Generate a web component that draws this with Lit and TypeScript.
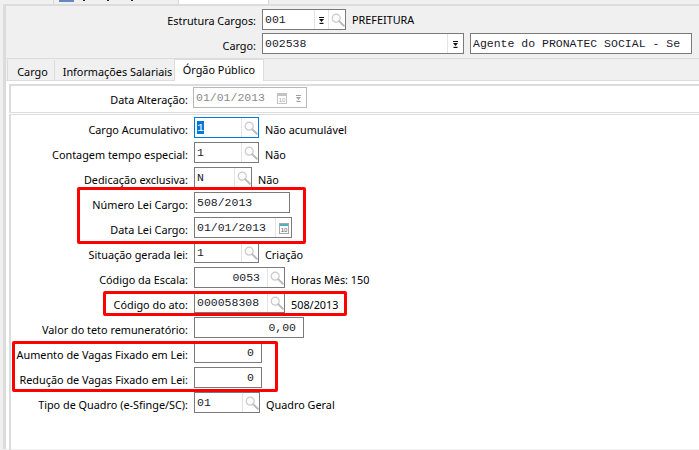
import { LitElement, html, css, svg } from "lit";
import { customElement } from "lit/decorators.js";

const lens = html`<svg class="lens" width="14" height="14" viewBox="0 0 14 14" fill="none">
  <circle cx="5.2" cy="5.2" r="4" stroke="#cacaca" stroke-width="1.2" fill="#fbfbfb"/>
  <path d="M8.4 8.4 L12.8 12.8" stroke="#bcbcbc" stroke-width="2" stroke-linecap="round"/>
</svg>`;

const spin = (color: string) => html`<svg width="5" height="7" viewBox="0 0 5 7">
  <path d="M0 0.5H5" stroke="${color}" stroke-width="1"/>
  <path d="M0 2H5L2.5 5Z" fill="${color}"/>
  <path d="M0.5 6.4H4.5" stroke="${color}" stroke-width="1.2"/>
</svg>`;

const cal = (dim: boolean) => html`<svg width="10" height="11" viewBox="0 0 10 11">
  <rect x="0.5" y="0.5" width="9" height="10" fill="#fff" stroke="${dim ? "#c4c4c4" : "#a8a8a8"}"/>
  <rect x="1" y="1" width="8" height="2" fill="${dim ? "#c4c4c4" : "#4fb3bf"}"/>
  ${svg`<text x="5" y="9.2" text-anchor="middle" font-size="6" font-family="Liberation Sans, sans-serif" fill="${dim ? "#aaa" : "#555"}">10</text>`}
</svg>`;

@customElement("app-root")
export class AppRoot extends LitElement {
  static styles = css`
    :host {
      display: block;
      position: relative;
      width: 699px;
      height: 450px;
      overflow: hidden;
      background: #f0f0f0;
      font-family: "Noto Sans", "DejaVu Sans", sans-serif;
      font-size: 10.85px;
      color: #000;
    }
    .strip { display: flex; height: 4px; padding-left: 53px; }
    .strip-tab { width: 119px; border-left: 1px solid #d8d8d8; border-right: 1px solid #d8d8d8; display: flex; padding-left: 5px; gap: 9px; }
    .strip-icon { width: 15px; height: 2px; background: #6488c0; }
    .strip-mark { width: 2px; height: 1px; background: #222; margin-right: 13px; }
    .strip-active { width: 89px; background: #fff; border-right: 1px solid #d8d8d8; }

    .frame { margin-left: 3px; border-left: 3px solid #dcdcdc; border-top: 2px solid #dcdcdc; }
    .header {
      border-bottom: 1px solid #dcdcdc;
      padding: 3px 0 4px;
      display: flex;
      flex-direction: column;
      gap: 3px;
      height: 45px;
    }
    .row { display: flex; align-items: center; height: 21px; flex: none; }
    .label { flex: none; text-align: right; white-space: nowrap; padding-top: 3px; }
    .estr { padding-top: 1px; }
    .header .label { width: 250px; margin-right: 6px; }
    .body-label { width: 177px; margin-right: 6px; }
    .field {
      box-sizing: border-box;
      height: 21px;
      border: 1px solid #7a7a7a;
      background: #fff;
      display: flex;
      align-items: stretch;
      font-family: "Liberation Mono", monospace;
      font-size: 11.5px;
      color: #1a1a2a;
      flex: none;
    }
    .val { flex: 1; padding: 2px 0 0 2px; line-height: 15px; white-space: pre; overflow: hidden; }
    .val.right { text-align: right; padding-right: 7px; }
    .btn { flex: none; width: 17px; border-left: 1px solid #e4e4e4; display: flex; align-items: center; justify-content: center; padding-top: 1px; box-sizing: border-box; }
    .btn.plain { width: 16px; }
    .btn.narrow { width: 14px; }
    .btn.bare { width: 16px; border-left: none; }
    .lens { margin-left: 2px; }
    .after { margin-left: 6px; padding-top: 3px; white-space: nowrap; }
    .after.top { padding-top: 0; }
    .w58 { width: 58px; } .w65 { width: 65px; } .w66 { width: 66px; } .w68 { width: 68px; }
    .w84 { width: 84px; } .w91 { width: 91px; } .w96 { width: 96px; } .w98 { width: 98px; }
    .w110 { width: 110px; } .w114 { width: 114px; } .w202 { width: 202px; }
    .w222 { width: 222px; margin-left: 6px; }

    .tabs { display: flex; height: 21px; padding-left: 1px; align-items: flex-end; }
    .tab { box-sizing: border-box; height: 20px; display: flex; align-items: center; justify-content: center; border-left: 1px solid #dcdcdc; white-space: nowrap; padding-top: 2px; }
    .t1 { width: 47px; padding-left: 3px; }
    .t2 { width: 120px; padding-left: 6px; }
    .t3 { width: 90px; height: 22px; background: #fff; border: 1px solid #dcdcdc; border-bottom: none; padding: 0 0 3px; position: relative; top: 1px; }

    .pane { background: #fff; border-top: 1px solid #dcdcdc; padding: 3px 0 0 3px; height: 369px; box-sizing: border-box; }
    .box1 { border-top: 2px solid #dcdcdc; border-left: 2px solid #dcdcdc; border-bottom: 1px solid #dcdcdc; padding: 1px 0 4px; margin-bottom: 1px; }
    .box1 .field { margin-left: -1px; color: #8a8a8a; border-color: #b8b8b8; }
    .box2 { border-top: 1px solid #dcdcdc; border-left: 2px solid #dcdcdc; padding-top: 2px; display: flex; flex-direction: column; gap: 4px; height: 340px; }

    .focus { border-color: #0078d7; }
    .sel { background: #0078d7; color: #fff; display: inline-block; width: 7px; height: 13px; line-height: 13px; }

    .red { position: absolute; box-sizing: border-box; border: 3px solid #f00; border-radius: 2px; pointer-events: none; }
    .r1 { left: 77px; top: 187px; width: 229px; height: 57px; }
    .r2 { left: 103px; top: 291px; width: 244px; height: 25px; }
    .r3 { left: 12px; top: 341px; width: 266px; height: 51px; }
  `;

  private lookup(w: string, v: string, right = false) {
    return html`<div class="field ${w}">
      <div class="val ${right ? "right" : ""}">${v}</div>
      <div class="btn">${lens}</div>
    </div>`;
  }

  private lbl(t: string) {
    return html`<div class="label body-label">${t}</div>`;
  }

  render() {
    return html`
      <div class="strip">
        <div class="strip-tab">
          <span class="strip-icon"></span>
          <span class="strip-mark"></span><span class="strip-mark"></span><span class="strip-mark"></span>
        </div>
        <div class="strip-active"></div>
      </div>

      <div class="frame">
        <div class="header">
          <div class="row">
            <div class="label estr">Estrutura Cargos:</div>
            <div class="field w84">
              <div class="val">001</div>
              <div class="btn narrow">${spin("#111")}</div>
              <div class="btn">${lens}</div>
            </div>
            <div class="after top">PREFEITURA</div>
          </div>
          <div class="row">
            <div class="label">Cargo:</div>
            <div class="field w202">
              <div class="val">002538</div>
              <div class="btn plain">${spin("#111")}</div>
            </div>
            <div class="field w222">
              <div class="val">Agente do PRONATEC SOCIAL - Se</div>
            </div>
          </div>
        </div>

        <div class="tabs">
          <div class="tab t1">Cargo</div>
          <div class="tab t2">Informações Salariais</div>
          <div class="tab t3">Órgão Público</div>
        </div>

        <div class="pane">
          <div class="box1">
            <div class="row">
              ${this.lbl("Data Alteração:")}
              <div class="field w114">
                <div class="val">01/01/2013</div>
                <div class="btn bare">${cal(true)}</div>
                <div class="btn bare">${spin("#a0a0a0")}</div>
              </div>
            </div>
          </div>
          <div class="box2">
            <div class="row">
              ${this.lbl("Cargo Acumulativo:")}
              <div class="field focus w65">
                <div class="val"><span class="sel">1</span></div>
                <div class="btn">${lens}</div>
              </div>
              <div class="after">Não acumulável</div>
            </div>
            <div class="row">
              ${this.lbl("Contagem tempo especial:")}
              ${this.lookup("w65", "1")}
              <div class="after">Não</div>
            </div>
            <div class="row">
              ${this.lbl("Dedicação exclusiva:")}
              ${this.lookup("w58", "N")}
              <div class="after">Não</div>
            </div>
            <div class="row">
              ${this.lbl("Número Lei Cargo:")}
              <div class="field w96"><div class="val">508/2013</div></div>
            </div>
            <div class="row">
              ${this.lbl("Data Lei Cargo:")}
              <div class="field w98">
                <div class="val">01/01/2013</div>
                <div class="btn plain">${cal(false)}</div>
              </div>
            </div>
            <div class="row">
              ${this.lbl("Situação gerada lei:")}
              ${this.lookup("w65", "1")}
              <div class="after">Criação</div>
            </div>
            <div class="row">
              ${this.lbl("Código da Escala:")}
              ${this.lookup("w91", "0053", true)}
              <div class="after">Horas Mês: 150</div>
            </div>
            <div class="row">
              ${this.lbl("Código do ato:")}
              ${this.lookup("w91", "000058308")}
              <div class="after">508/2013</div>
            </div>
            <div class="row">
              ${this.lbl("Valor do teto remuneratório:")}
              <div class="field w110"><div class="val right">0,00</div></div>
            </div>
            <div class="row">
              ${this.lbl("Aumento de Vagas Fixado em Lei:")}
              <div class="field w68"><div class="val right">0</div></div>
            </div>
            <div class="row">
              ${this.lbl("Redução de Vagas Fixado em Lei:")}
              <div class="field w68"><div class="val right">0</div></div>
            </div>
            <div class="row">
              ${this.lbl("Tipo de Quadro (e-Sfinge/SC):")}
              ${this.lookup("w66", "01")}
              <div class="after">Quadro Geral</div>
            </div>
          </div>
        </div>
      </div>

      <div class="red r1"></div>
      <div class="red r2"></div>
      <div class="red r3"></div>
    `;
  }
}
